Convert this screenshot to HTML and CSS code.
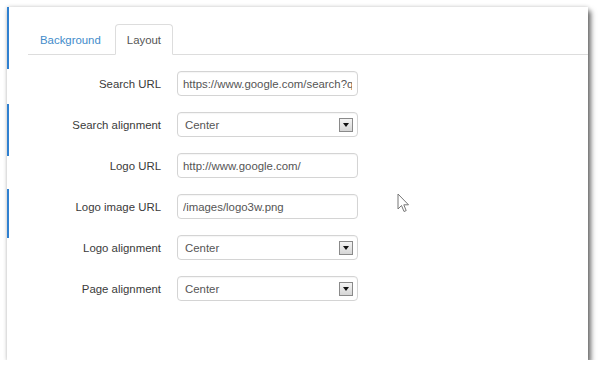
FILE: index.html
```html
<!DOCTYPE html>
<html lang="en">
  <head>
    <meta charset="UTF-8" />
    <title>Options - Layout</title>
    <link rel="stylesheet" href="styles.css">
  </head>
  <body>
    <div class="window">
      <span class="edge edge-1"></span>
      <span class="edge edge-2"></span>
      <span class="edge edge-3"></span>

      <ul class="tabs">
        <li><a href="#">Background</a></li>
        <li class="active"><a href="#">Layout</a></li>
      </ul>

      <form class="form">
        <label for="search-url">Search URL</label>
        <input type="text" id="search-url" class="field" value="https://www.google.com/search?q=" />

        <label>Search alignment</label>
        <div class="field select"><span>Center</span><span class="drop"></span></div>

        <label for="logo-url">Logo URL</label>
        <input type="text" id="logo-url" class="field" value="http://www.google.com/" />

        <label for="logo-img">Logo image URL</label>
        <input type="text" id="logo-img" class="field" value="/images/logo3w.png" />

        <label>Logo alignment</label>
        <div class="field select"><span>Center</span><span class="drop"></span></div>

        <label>Page alignment</label>
        <div class="field select"><span>Center</span><span class="drop"></span></div>
      </form>

      <svg class="cursor" width="13" height="20" viewBox="0 0 13 20">
        <path d="M1 1 L1 16 L4.5 12.5 L7 18.5 L9.2 17.6 L6.8 11.8 L11.5 11.8 Z" fill="#fff" stroke="#777" stroke-width="1" stroke-linejoin="round"/>
      </svg>
    </div>
  </body>
</html>
```

FILE: styles.css
```css
* {
  margin: 0;
  padding: 0;
  box-sizing: border-box;
  font-family: "Liberation Sans", Arial, sans-serif;
}

body {
  background-color: #fff;
  color: #333;
  font-size: 11.4px;
  padding: 7px 0 0 7px;
}

.window {
  position: relative;
  width: 581px;
  height: 353px;
  background-color: white;
  box-shadow: 3px 4px 5px rgba(0, 0, 0, 0.55), 0 0 4px rgba(0, 0, 0, 0.2);
}

.edge {
  position: absolute;
  left: 0;
  width: 2px;
  background-color: #2f80d0;
}

.edge-1 { top: 0; height: 62px; }
.edge-2 { top: 97px; height: 52px; }
.edge-3 { top: 182px; height: 49px; }

.tabs {
  display: flex;
  list-style: none;
  margin-left: 21px;
  padding-top: 17px;
  border-bottom: 1px solid #ddd;
}

.tabs li {
  margin-right: 2px;
  margin-bottom: -1px;
}

.tabs a {
  display: block;
  height: 31px;
  line-height: 31px;
  padding: 0 11px;
  color: #428bca;
  text-decoration: none;
  border: 1px solid transparent;
  border-radius: 4px 4px 0 0;
}

.tabs .active a {
  color: #555;
  background-color: white;
  border-color: #ddd;
  border-bottom-color: white;
}

.form {
  display: grid;
  grid-template-columns: 154px 181px;
  column-gap: 16px;
  row-gap: 16px;
  align-items: center;
  margin-top: 16px;
}

.form label {
  text-align: right;
  color: #3a3a3a;
}

.field {
  height: 25px;
  border: 1px solid #d4d4d4;
  border-radius: 4px;
  padding: 0 5px;
  font-size: 11.4px;
  color: #555;
  background-color: white;
  box-shadow: inset 0 1px 1px rgba(0, 0, 0, 0.04);
  outline: none;
}

.select {
  display: flex;
  align-items: center;
  justify-content: space-between;
  padding: 0 4px 0 7px;
}

.drop {
  position: relative;
  width: 14px;
  height: 14px;
  border: 1px solid #8a8a8a;
  background: linear-gradient(#f4f4f4, #d6d6d6);
}

.drop::after {
  content: "";
  position: absolute;
  left: 3px;
  top: 4px;
  border-left: 3px solid transparent;
  border-right: 3px solid transparent;
  border-top: 4px solid #111;
}

.cursor {
  position: absolute;
  left: 390px;
  top: 186px;
}
```
